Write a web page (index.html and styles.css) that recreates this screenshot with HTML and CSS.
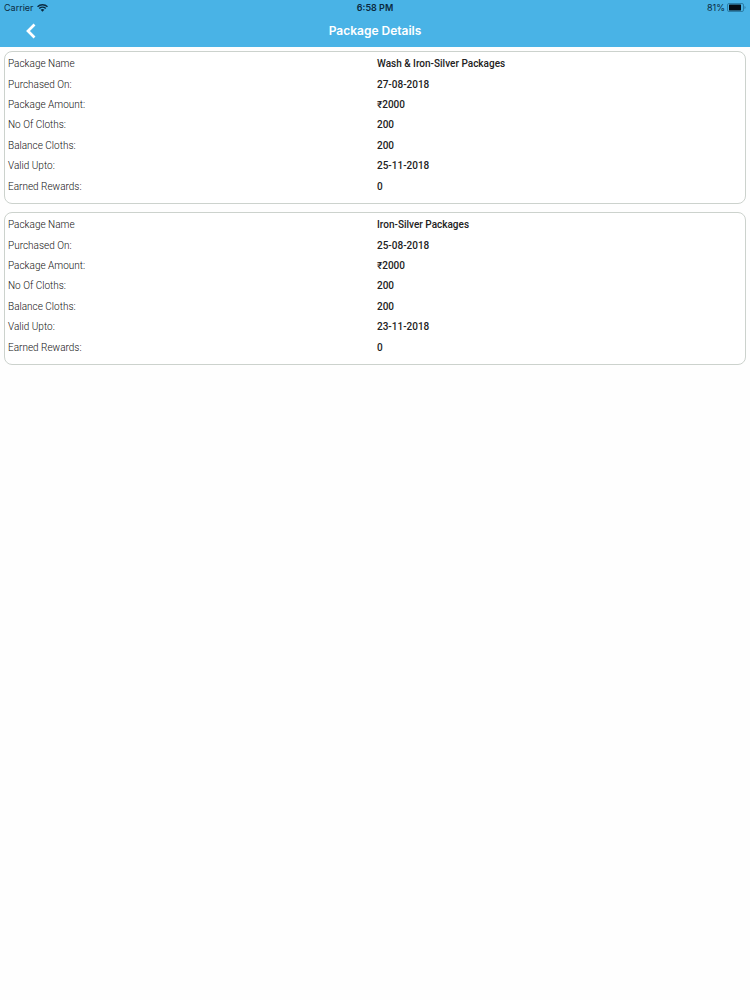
FILE: index.html
```html
<!DOCTYPE html>
<html lang="en">
<head>
<meta charset="utf-8">
<meta name="viewport" content="width=device-width, initial-scale=1">
<title>Package Details</title>
<link rel="stylesheet" href="styles.css">
</head>
<body>
<header class="top">
  <div class="status">
    <span class="carrier">Carrier
      <svg class="wifi" viewBox="0 0 22 16" aria-hidden="true"><path d="M1 5.5a14.5 14.5 0 0 1 20 0M4.5 9a9.5 9.5 0 0 1 13 0" fill="none" stroke="currentColor" stroke-width="3"/><path d="M7.2 11.6a5.5 5.5 0 0 1 7.6 0L11 15.6z" fill="currentColor"/></svg>
    </span>
    <span class="time">6:58 PM</span>
    <span class="battery">81%
      <svg class="cell" viewBox="0 0 19 9" aria-hidden="true"><rect x=".5" y=".5" width="16" height="8" rx="1.5" fill="none" stroke="#2c7ea8"/><rect x="2" y="1.5" width="12" height="6" rx=".5" fill="#050d14"/><path d="M17.5 3v3q1-.4 1-1.500T17.500 3z" fill="#2c7ea8"/></svg>
    </span>
  </div>
  <div class="nav">
    <button class="back" type="button" aria-label="Back"><svg viewBox="0 0 10 16" aria-hidden="true"><path d="M8.500 1.500L2 8l6.500 6.500" fill="none" stroke="#fff" stroke-width="2.700"/></svg></button>
    <h1 class="title">Package Details</h1>
  </div>
</header>
<main class="list">
  <dl class="card">
    <dt>Package Name</dt><dd>Wash &amp; Iron-Silver Packages</dd>
    <dt>Purchased On:</dt><dd>27-08-2018</dd>
    <dt>Package Amount:</dt><dd>₹2000</dd>
    <dt>No Of Cloths:</dt><dd>200</dd>
    <dt>Balance Cloths:</dt><dd>200</dd>
    <dt>Valid Upto:</dt><dd>25-11-2018</dd>
    <dt>Earned Rewards:</dt><dd>0</dd>
  </dl>
  <dl class="card">
    <dt>Package Name</dt><dd>Iron-Silver Packages</dd>
    <dt>Purchased On:</dt><dd>25-08-2018</dd>
    <dt>Package Amount:</dt><dd>₹2000</dd>
    <dt>No Of Cloths:</dt><dd>200</dd>
    <dt>Balance Cloths:</dt><dd>200</dd>
    <dt>Valid Upto:</dt><dd>23-11-2018</dd>
    <dt>Earned Rewards:</dt><dd>0</dd>
  </dl>
</main>
</body>
</html>
```
FILE: styles.css
```css
* { box-sizing: border-box; }
body { margin: 0; background: #fefefe; font-family: Roboto, sans-serif; }
.top { padding-bottom: 1px; background: #49b3e6; font-family: Inter, sans-serif; }
.status {
  display: grid;
  grid-template-columns: 1fr auto 1fr;
  align-items: center;
  height: 15px;
  padding: 0 4px;
  font-size: 9px;
  color: #0b2a40;
}
.carrier, .battery { display: flex; align-items: center; gap: 3px; }
.battery { justify-content: flex-end; gap: 2px; }
.time { font-weight: 600; }
.wifi { width: 11px; height: 8px; }
.cell { width: 19px; height: 9px; }
.nav {
  display: grid;
  grid-template-columns: 62px 1fr 62px;
  align-items: center;
  height: 31px;
}
.back {
  display: flex;
  justify-content: center;
  padding: 0;
  border: 0;
  background: none;
}
.back svg { width: 10px; height: 16px; }
.title {
  margin: 0;
  font-size: 12px;
  font-weight: 600;
  line-height: 16px;
  text-align: center;
  color: #fff;
}
.list { display: grid; gap: 8px; padding: 4px; }
.card {
  display: grid;
  grid-template-columns: 1fr 1fr;
  align-items: center;
  min-height: 153px;
  margin: 0;
  padding: 2px 3px 6px;
  border: 1px solid #ccd2cd;
  border-radius: 8px;
  background: #fff;
  font-size: 10px;
  line-height: 20px;
}
.card dt { font-weight: 300; color: #111; }
.card dd { margin: 0; padding-left: 2px; font-weight: 500; color: #222; }
```
